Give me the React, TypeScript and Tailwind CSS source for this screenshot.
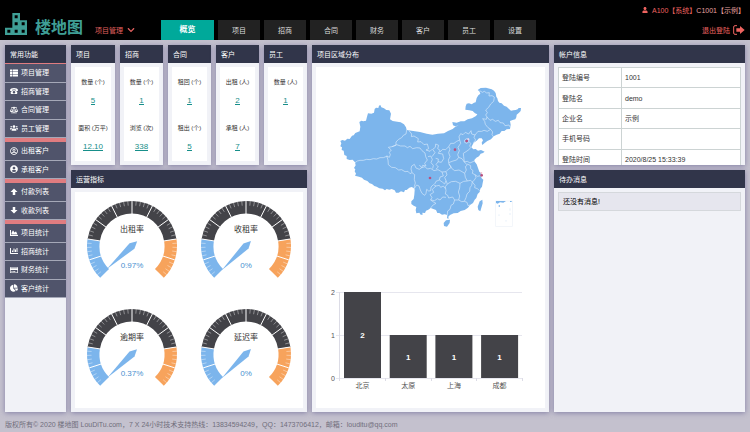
import type { ReactNode } from "react";
import clsx from "clsx";
import {
    FaBalanceScale, FaChartArea, FaChartBar, FaChartPie, FaChevronDown,
    FaRegCreditCard, FaRegUserCircle, FaThList, FaUser, FaUserCircle, FaUsers
} from "react-icons/fa";

type Stat = { label: string; value: string };

const tabs = ["项目", "招商", "合同", "财务", "客户", "员工", "设置"];

const menuGroups = [
    [
        { name: "项目管理", icon: <FaThList /> },
        { name: "招商管理", icon: <TelephoneIcon /> },
        { name: "合同管理", icon: <FaBalanceScale /> },
        { name: "员工管理", icon: <FaUsers /> },
    ],
    [
        { name: "出租客户", icon: <FaRegUserCircle /> },
        { name: "承租客户", icon: <FaUserCircle /> },
    ],
    [
        { name: "付款列表", icon: <ArrowIcon /> },
        { name: "收款列表", icon: <ArrowIcon down /> },
    ],
    [
        { name: "项目统计", icon: <FaChartArea /> },
        { name: "招商统计", icon: <FaChartBar /> },
        { name: "财务统计", icon: <FaRegCreditCard /> },
        { name: "客户统计", icon: <FaChartPie /> },
    ],
];

const statPanels: { title: string; stats: Stat[] }[] = [
    { title: "项目", stats: [{ label: "数量 (个)", value: "5" }, { label: "面积 (万平)", value: "12.10" }] },
    { title: "招商", stats: [{ label: "数量 (个)", value: "1" }, { label: "浏览 (次)", value: "338" }] },
    { title: "合同", stats: [{ label: "租回 (个)", value: "1" }, { label: "租出 (个)", value: "5" }] },
    { title: "客户", stats: [{ label: "出租 (人)", value: "2" }, { label: "承租 (人)", value: "7" }] },
    { title: "员工", stats: [{ label: "数量 (人)", value: "1" }] },
];

const gauges = [
    { name: "出租率", value: 0.97 },
    { name: "收租率", value: 0 },
    { name: "逾期率", value: 0.37 },
    { name: "延迟率", value: 0 },
];

const account = [
    ["登陆编号", "1001"],
    ["登陆名", "demo"],
    ["企业名", "示例"],
    ["手机号码", ""],
    ["登陆时间", "2020/8/25 15:33:39"],
];

const cities = [
    { name: "北京", count: 2 },
    { name: "太原", count: 1 },
    { name: "上海", count: 1 },
    { name: "成都", count: 1 },
];

const cityPins = [[470, 243], [435, 269], [360, 354], [515, 346]];

const mainland =
    "M91 243L97 240 105 242 112 236 119 237 126 227 131 226 136 219 149 214 151 200 148 186 154 182 160 184 168 182 171 170 174 160 184 161 192 158 194 147 198 143 205 144 207 137 211 135 214 142 222 145 229 150 238 151 243 161 240 178 248 183 262 185 272 187 282 193 288 202 290 210 310 213 330 216 350 221 367 224 384 221 402 220 414 213 428 207 436 200 446 196 436 199 429 196 427 186 440 188 452 184 463 184 473 178 486 175 498 168 502 163 495 160 488 153 478 151 466 149 467 139 470 131 477 130 485 133 492 128 497 127 500 114 505 106 511 101 508 94 503 90 512 84 528 83 545 88 552 92 557 99 559 110 562 115 564 123 568 128 575 130 582 137 590 140 597 147 603 152 610 151 617 150 623 148 626 144 633 144 632 153 627 158 620 164 619 172 616 178 608 180 600 183 602 194 600 207 590 208 583 213 575 213 569 221 560 224 551 229 543 238 532 243 524 249 517 255 515 248 519 241 515 235 507 235 500 242 491 248 487 256 484 262 490 268 497 267 504 272 513 270 524 275 519 279 512 281 507 289 499 293 493 300 493 304 500 313 504 324 508 335 516 341 512 347 515 355 520 359 518 369 516 380 511 386 509 396 503 402 499 414 494 419 489 429 480 435 474 443 464 450 452 453 443 459 431 460 420 465 415 470 416 476 411 475 412 465 404 463 396 464 388 459 382 459 378 450 370 447 362 444 355 449 348 452 345 459 337 458 338 464 332 464 328 458 319 460 317 450 319 441 311 437 304 432 304 424 311 417 313 404 314 391 311 384 305 381 298 383 290 390 285 390 282 397 273 394 266 398 258 398 254 391 245 387 238 389 230 387 225 391 218 386 208 385 200 380 193 378 186 372 179 370 172 363 162 359 156 353 147 350 135 347 138 341 134 334 136 328 132 324 137 316 135 307 128 299 119 300 110 297 110 288 103 285 101 272 95 270 96 262 91 259 94 250Z";

const provinceBorders =
    "M135 308L142 303 150 301 160 301 170 298 180 299 190 296 200 297 210 293 220 293 232 288M230 288L238 292 241 284 238 277 244 270 235 262 246 260 258 256 258 246 266 238 275 233 280 226 288 222 290 210" +
    "M246 260L260 254 272 258 285 258 292 263 300 259 308 266 320 263 330 264 336 272 345 279 347 290 352 300 344 310 348 318 338 316 335 323 328 315M230 288L234 300 235 314 245 322 256 323 266 330 275 329 285 335 294 334 300 341 306 338 303 327 305 318 313 313 318 324 328 328 335 323" +
    "M306 338L314 344 313 358 316 369 313 380 314 391M314 384L320 375 327 378 331 390 336 400 344 406 348 400 350 388 356 393 362 392 363 381 370 374 378 378" +
    "M335 323L345 320 352 327 362 325 372 332 384 329 396 336 400 348 390 351 388 360 378 364 374 372" +
    "M297 212L305 222 304 230 312 228 325 236 323 246 333 245 342 254 352 252 356 266 348 270 360 274 366 268M366 290L375 278 368 268 376 262 377 252 386 256 383 266 390 271 385 280 398 282 401 296 394 307 384 305 385 297 377 295" +
    "M354 290L362 288 367 298 363 308 370 316 368 326M385 305L378 313 385 321 378 327" +
    "M390 276L398 268 407 269 416 260 420 267 416 278 420 290 415 300 417 312 424 322 416 327 408 335 396 336" +
    "M416 260L422 250 432 250 440 244 449 240 452 250 444 262 448 272 443 284 446 292 440 300 429 303 416 308" +
    "M449 240L447 230 452 221 459 224 466 217 476 222 483 212 485 222 495 225 492 232 497 240 490 248M464 247L464 240 470 236 476 237 477 245 470 250 464 247M477 245L482 250 479 258 482 262" +
    "M446 292L456 296 463 306 461 290 460 280 468 275 478 268 482 262M463 306L472 304 480 309 493 303M495 225L504 214 515 214 522 211 532 214 542 208" +
    "M542 208L534 203 526 193 524 184 518 176 529 178 531 171 527 165 532 158 527 150 536 142 542 132 551 124 553 111 546 107 537 108 538 98 530 99 523 94 517 97 509 92M531 171L540 181 548 178 556 184 565 181 570 188 580 189 585 197 597 195 601 202M542 208L548 216 546 224 551 231" +
    "M417 312L425 325 434 332 447 330 456 335 464 340 469 330 466 320 472 315 463 306M472 312L482 317 482 326 489 332 487 340 495 344 502 349 512 347" +
    "M464 340L466 352 472 363 482 361 487 366 493 360 498 352 495 344M408 335L411 345 404 352 408 362 412 372 424 365 437 364 450 370 461 364 472 363" +
    "M412 372L406 380 408 392 406 402 413 406 416 414 428 411 434 420 446 420 449 408 445 396 449 384 450 370M487 366L485 376 480 383 479 394 471 402 468 413 463 424 455 425 446 420M487 366L495 376 494 383 502 386 509 392M463 424L471 427 474 437 480 435" +
    "M378 378L388 376 392 382 400 378 406 386M378 378L367 388 371 397 360 404 366 412 362 420 374 422 382 416 390 420 398 411 408 412M362 420L372 427 378 430 368 436 362 444M434 420L430 432 423 436 420 448 413 453 412 465M388 360L398 367 404 372 408 362";

function point(radius: number, degrees: number) {
    const rad = (degrees * Math.PI) / 180;
    return `${57 + radius * Math.sin(rad)} ${54 - radius * Math.cos(rad)}`;
}

function ring(from: number, to: number) {
    const large = to - from > 180 ? 1 : 0;
    return `M${point(45, from)}A45 45 0 ${large} 1 ${point(45, to)}L${point(32.5, to)}A32.5 32.5 0 ${large} 0 ${point(32.5, from)}Z`;
}

function TelephoneIcon() {
    return (
        <svg viewBox="0 0 16 16" className="h-[1em] w-[1em]" fill="currentColor" aria-hidden="true">
            <path d="M8 2C4 2 0 3.6 0 6.2c0 1 .3 1.8 1 1.8h2.4c.7 0 1-.5 1-1.3V5.6C6.500 5 9.500 5 11.600 5.600v1.100c0 .8.300 1.300 1 1.300H15c.7 0 1-.8 1-1.800C16 3.600 12 2 8 2z" />
            <path fillRule="evenodd" d="M5.500 6.500h5l4 3.500v3c0 .6-.4 1-1 1h-11c-.6 0-1-.4-1-1v-3zM8 7.800a2.600 2.600 0 100 5.200 2.600 2.600 0 000-5.200z" />
        </svg>
    );
}

function ArrowIcon({ down = false }: { down?: boolean }) {
    return (
        <svg viewBox="0 0 16 16" className="h-[1em] w-[1em]" fill="currentColor" aria-hidden="true">
            <path d={down ? "M8 15L1 8H5.500V2H10.500V8H15Z" : "M8 1L15 8H10.500V14H5.500V8H1Z"} />
        </svg>
    );
}

function LogoIcon() {
    return (
        <svg viewBox="0 0 66 66" className="h-[22px] w-[22px]" fill="#3f9f96" fillRule="evenodd" aria-hidden="true">
            <path d="M22 0H45V22H66V66H0V44H22ZM29 7V16H38V7ZM29 28V37H38V28ZM50 28V37H59V28ZM7 50V59H16V50ZM29 50V59H38V50ZM50 50V59H59V50Z" />
        </svg>
    );
}

function Panel({ title, className, children }: { title: string; className?: string; children: ReactNode }) {
    return (
        <section className={clsx("flex min-w-0 flex-col bg-[#f1f2f7] shadow-[0_1px_5px_rgba(90,86,140,0.6)]", className)}>
            <h2 className="flex h-[18px] shrink-0 items-center bg-[#31354a] px-[5px] text-[7px] text-white">{title}</h2>
            {children}
        </section>
    );
}

function Gauge({ name, value }: { name: string; value: number }) {
    const angle = -135 + value * 2.7;

    return (
        <svg viewBox="0 0 114 108" className="w-full" role="img" aria-label={name}>
            <path d={ring(-135, -81)} fill="#7cb5ec" />
            <path d={ring(-81, 81)} fill="#434348" />
            <path d={ring(81, 135)} fill="#f7a35c" />
            {Array.from({ length: 51 }, (_, i) => {
                const major = i % 5 === 0;
                const deg = -135 + i * 5.4;
                if (i === 0 || i === 50) return null;
                return (
                    <path
                        key={i}
                        d={`M${point(45, deg)}L${point(major ? 32 : 40.5, deg)}`}
                        stroke="#fff"
                        strokeWidth={major ? 1 : 0.5}
                        strokeOpacity={major ? 1 : 0.8}
                    />
                );
            })}
            <path d={`M${point(-7, angle)}L${point(3.6, angle - 90)}L${point(34, angle)}L${point(3.6, angle + 90)}Z`} fill="#7cb5ec" />
            <text x="57" y="40" textAnchor="middle" className="fill-[#333] text-[8px]">{name}</text>
            <text x="57" y="76" textAnchor="middle" className="fill-[#4a90cf] text-[8px]">{value}%</text>
        </svg>
    );
}

function ChinaMap() {
    return (
        <svg viewBox="18 21 687 615" className="w-full" role="img" aria-label="项目区域分布">
            <path d={mainland} fill="#7cb5ec" />
            <path d="M401 489L408 481 420 479 419 489 411 500 402 498ZM517 419L518 430 511 454 505 450 503 440 509 424Z" fill="#7cb5ec" />
            <path d={provinceBorders} fill="none" stroke="#d6e9fb" strokeWidth="2" strokeLinejoin="round" />
            <rect x="557" y="423" width="50" height="76" fill="none" stroke="#edf2f8" strokeWidth="2" />
            <path d="M558 423H588L580 428 570 427 563 431 558 429ZM566 436H570V440H566ZM600 423H605V426H600Z" fill="#7cb5ec" />
            <path d="M600 445V452M600 459V465M588 480V485M567 463V468" stroke="#dbe8f6" strokeWidth="2" />
            <circle cx="475" cy="238" r="3" fill="#f3d7ea" />
            <circle cx="514" cy="339" r="3" fill="#f3c3cf" />
            {cityPins.map(([x, y]) => (
                <circle key={x} cx={x} cy={y} r="4" fill="#b8507f" />
            ))}
        </svg>
    );
}

function CityChart() {
    return (
        <svg viewBox="0 0 229 136" className="w-full" role="img" aria-label="城市项目数量">
            {[2, 1, 0].map((n, i) => (
                <g key={n}>
                    <path d={`M20 ${20.5 + i * 43}H206`} stroke="#e6e6ee" />
                    <text x="19" y={23 + i * 43} textAnchor="end" className="fill-[#555] text-[7px]">{n}</text>
                </g>
            ))}
            <path d="M23.5 20V109M69.5 106V109M115.5 106V109M160.5 106V109M206.5 106V109" stroke="#dcdce6" />
            {cities.map((city, i) => {
                const height = city.count * 43;
                const center = 46.5 + i * 45.7;
                return (
                    <g key={city.name}>
                        <rect x={center - 18.5} y={106 - height} width="37" height={height} fill="#434348" />
                        <text x={center} y={109 - height / 2} textAnchor="middle" className="fill-white text-[8px] font-bold">{city.count}</text>
                        <text x={center} y="116" textAnchor="middle" className="fill-[#555] text-[7px]">{city.name}</text>
                    </g>
                );
            })}
        </svg>
    );
}

function Header() {
    return (
        <header className="flex h-10 bg-black px-[5px] text-[7px]">
            <div className="flex items-center gap-2 pt-2 text-[#3f9f96]">
                <LogoIcon />
                <h1 className="pt-2 text-[16px] leading-5 font-bold">楼地图</h1>
            </div>
            <button type="button" className="ml-3 flex h-5 items-center gap-1 self-end text-[#e0605f]">
                项目管理
                <FaChevronDown className="h-2 w-2" />
            </button>
            <nav className="ml-[26px] flex h-5 gap-1 self-end">
                <a href="#overview" className="flex w-[53px] items-center justify-center bg-[#00a99a] text-[8px] font-bold text-white">概览</a>
                {tabs.map((tab) => (
                    <a key={tab} href={`#${tab}`} className="flex w-[42px] items-center justify-center bg-[#222] text-[#ddd]">{tab}</a>
                ))}
            </nav>
            <div className="ml-auto flex flex-col items-end">
                <p className="flex h-5 items-center text-[#e8a3a0]">
                    <FaUser className="mr-1 h-[6px] w-[6px] text-[#ef6460]" />
                    <span className="text-[#ef6460]">A100【系统】</span>C1001【示例】
                </p>
                <a href="#logout" className="flex h-5 items-center gap-[3px] text-[#ef6460]">
                    退出登陆
                    <svg viewBox="0 0 36 30" className="h-[10px] w-3" aria-hidden="true">
                        <path d="M12 2H6Q2 2 2 6V24Q2 28 6 28H12" fill="none" stroke="currentColor" strokeWidth="3" />
                        <path d="M10 10H21V3L35 15 21 27V20H10Z" fill="currentColor" />
                    </svg>
                </a>
            </div>
        </header>
    );
}

export default function App() {
    return (
        <div className="flex min-h-screen flex-col bg-[#c4c1ce] font-['Liberation_Sans','Noto_Sans_CJK_SC',sans-serif] leading-none text-[#333]">
            <Header />

            <main className="grid flex-1 grid-cols-[61px_236fr_237fr_191fr] gap-[5px] p-[5px] pb-1">
                <Panel title="常用功能">
                    <nav className="flex h-[235px] flex-col gap-1 bg-[#e07c80] pt-px">
                        {menuGroups.map((group, i) => (
                            <ul key={i} className={clsx("flex flex-col", i % 3 === 0 ? "grow-4" : "grow-2")}>
                                {group.map((item) => (
                                    <li key={item.name} className="flex flex-1 border-b border-[#a5a8b8] bg-[#50546b]">
                                        <a href={`#${item.name}`} className="flex flex-1 items-center gap-[3px] pl-[5px] text-[7px] text-white">
                                            <span className="flex w-2 justify-center text-[8px]">{item.icon}</span>
                                            {item.name}
                                        </a>
                                    </li>
                                ))}
                            </ul>
                        ))}
                    </nav>
                </Panel>

                <div className="flex min-w-0 flex-col gap-[5px]">
                    <div className="grid h-[120px] grid-cols-[44fr_43fr_43fr_43fr_43fr] gap-[5px]">
                        {statPanels.map((panel) => (
                            <Panel key={panel.title} title={panel.title}>
                                <div className="m-1 flex flex-1 flex-col gap-5 bg-white pt-3 text-center">
                                    {panel.stats.map((stat) => (
                                        <div key={stat.label} className="flex flex-col items-center gap-[11px]">
                                            <span className="text-[6px] leading-[7px] whitespace-nowrap">{stat.label}</span>
                                            <a href="#detail" className="border-b border-current text-[8px] leading-[7px] text-[#178f8a]">{stat.value}</a>
                                        </div>
                                    ))}
                                </div>
                            </Panel>
                        ))}
                    </div>
                    <Panel title="运营指标" className="flex-1">
                        <div className="m-1 grid flex-1 grid-cols-2 content-start bg-white">
                            {gauges.map((gauge) => (
                                <Gauge key={gauge.name} {...gauge} />
                            ))}
                        </div>
                    </Panel>
                </div>

                <Panel title="项目区域分布">
                    <div className="m-1 flex flex-1 flex-col bg-white">
                        <ChinaMap />
                        <CityChart />
                    </div>
                </Panel>

                <div className="flex min-w-0 flex-col gap-[5px]">
                    <Panel title="帐户信息" className="h-[120px] overflow-hidden">
                        <div className="p-1">
                            <table className="h-[103px] w-full border-collapse bg-white text-[7px]">
                                <tbody>
                                    {account.map(([label, value]) => (
                                        <tr key={label}>
                                            <th scope="row" className="w-[63px] border border-[#ccd3d3] px-[3px] text-left font-normal">{label}</th>
                                            <td className="border border-[#ccd3d3] px-[3px]">{value}</td>
                                        </tr>
                                    ))}
                                </tbody>
                            </table>
                        </div>
                    </Panel>
                    <Panel title="待办消息" className="flex-1">
                        <p className="m-1 flex h-[19px] items-center border border-[#d5d8dc] bg-[#e6e6ee] px-1 text-[7px] text-black">还没有消息!</p>
                    </Panel>
                </div>
            </main>

            <footer className="flex h-5 items-center px-[5px] pb-1 text-[7px] text-[#706e7c]">
                版权所有© 2020 楼地图 LouDiTu.com，7 X 24小时技术支持热线：13834594249，QQ：1473706412，邮箱：louditu@qq.com
            </footer>
        </div>
    );
}
